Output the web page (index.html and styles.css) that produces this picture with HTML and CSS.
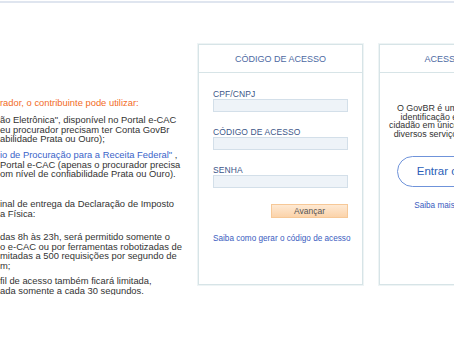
FILE: index.html
```html
<!DOCTYPE html>
<html lang="pt-BR">
<head>
<meta charset="utf-8">
<link rel="stylesheet" href="styles.css">
</head>
<body>
<div class="topbar"></div>
<div class="main">
  <div class="left">
    <p class="orange">rador, o contribuinte pode utilizar:</p>
    <p class="p1">ão Eletrônica", disponível no Portal e-CAC<br>eu procurador precisam ter Conta GovBr<br>abilidade Prata ou Ouro);</p>
    <p class="p2"><span class="blue">io de Procuração para a Receita Federal"</span> ,<br>Portal e-CAC (apenas o procurador precisa<br>om nível de confiabilidade Prata ou Ouro).</p>
    <p class="p3">inal de entrega da Declaração de Imposto<br>a Física:</p>
    <p class="p4">das 8h às 23h, será permitido somente o<br>o e-CAC ou por ferramentas robotizadas de<br>mitadas a 500 requisições por segundo de<br>m;</p>
    <p class="p5">fil de acesso também ficará limitada,<br>ada somente a cada 30 segundos.</p>
  </div>
  <div class="box">
    <div class="box-head">CÓDIGO DE ACESSO</div>
    <div class="form">
      <label class="lbl">CPF/CNPJ</label>
      <div class="input"></div>
      <label class="lbl">CÓDIGO DE ACESSO</label>
      <div class="input"></div>
      <label class="lbl">SENHA</label>
      <div class="input"></div>
      <div class="btn-row"><span class="btn">Avançar</span></div>
      <a class="link">Saiba como gerar o código de acesso</a>
    </div>
  </div>
  <div class="box box2">
    <div class="box-head">ACESSO GOV.BR</div>
    <div class="gov">
      <p class="gov-text">O GovBR é um serviço online de<br>identificação e autenticação do<br>cidadão em único login e senha para<br>diversos serviços públicos digitais.</p>
      <div class="pill">Entrar com gov.br</div>
      <a class="link">Saiba mais sobre o gov.br</a>
    </div>
  </div>
</div>
</body>
</html>
```
FILE: styles.css
```css
html, body {
  margin: 0;
  padding: 0;
  background: #fff;
  overflow: hidden;
}
body {
  font-family: "Liberation Sans", Arial, sans-serif;
  width: 454px;
  height: 341px;
}
.topbar {
  margin-top: 1px;
  height: 2px;
  background: #dfe5ef;
}
.main {
  display: flex;
  align-items: flex-start;
  width: 700px;
}
.left {
  width: 198px;
  flex-shrink: 0;
  padding-top: 95px;
  font-size: 9.4px;
  line-height: 9.7px;
  color: #333;
  white-space: nowrap;
  overflow: hidden;
}
.left p {
  margin: 0;
}
.left .orange {
  color: #f26b26;
}
.left .blue {
  color: #3a63c9;
}
.left .p1 { margin-top: 7.3px; }
.left .p2 { margin-top: 5.9px; }
.left .p3 { margin-top: 19.9px; }
.left .p4 { margin-top: 13.6px; }
.left .p5 { margin-top: 5.2px; }
.box {
  flex-shrink: 0;
  margin-top: 41px;
  width: 163px;
  height: 239px;
  border: 1px solid #d7e4e7;
  box-shadow: 0 0 0 1px #eef4f5;
}
.box2 {
  margin-left: 16px;
}
.box-head {
  height: 27px;
  border-bottom: 1px solid #d7e4e7;
  display: flex;
  align-items: center;
  justify-content: center;
  font-size: 9px;
  color: #4d6aa3;
}
.form {
  display: flex;
  flex-direction: column;
  padding: 16px 14px 0 14px;
}
.lbl {
  font-size: 8.5px;
  line-height: 10px;
  color: #3c5688;
  letter-spacing: 0.1px;
}
.input {
  height: 11px;
  border: 1px solid #d3dfe9;
  background: #eef3f8;
  margin-bottom: 15px;
}
.btn-row {
  display: flex;
  justify-content: flex-end;
  margin-top: 1px;
}
.btn {
  width: 75px;
  height: 12px;
  border: 1px solid #f6c897;
  background: linear-gradient(#fee9d3, #fbd3aa);
  font-size: 8.5px;
  line-height: 12px;
  text-align: center;
  color: #555;
}
.link {
  margin-top: 16px;
  font-size: 8.2px;
  line-height: 10px;
  color: #3a5cc0;
  text-align: center;
  white-space: nowrap;
  display: block;
}
.gov {
  display: flex;
  flex-direction: column;
  align-items: center;
  padding-top: 31px;
}
.gov-text {
  margin: 0;
  font-size: 8.9px;
  line-height: 8.7px;
  color: #333;
  text-align: center;
  white-space: nowrap;
}
.pill {
  margin-top: 17px;
  align-self: flex-start;
  margin-left: 17px;
  width: 128px;
  height: 29px;
  border: 1.5px solid #6f93da;
  border-radius: 16px;
  display: flex;
  align-items: center;
  justify-content: center;
  font-size: 11.5px;
  color: #2b5fb8;
}
.gov .link {
  margin-top: 14px;
}
```
